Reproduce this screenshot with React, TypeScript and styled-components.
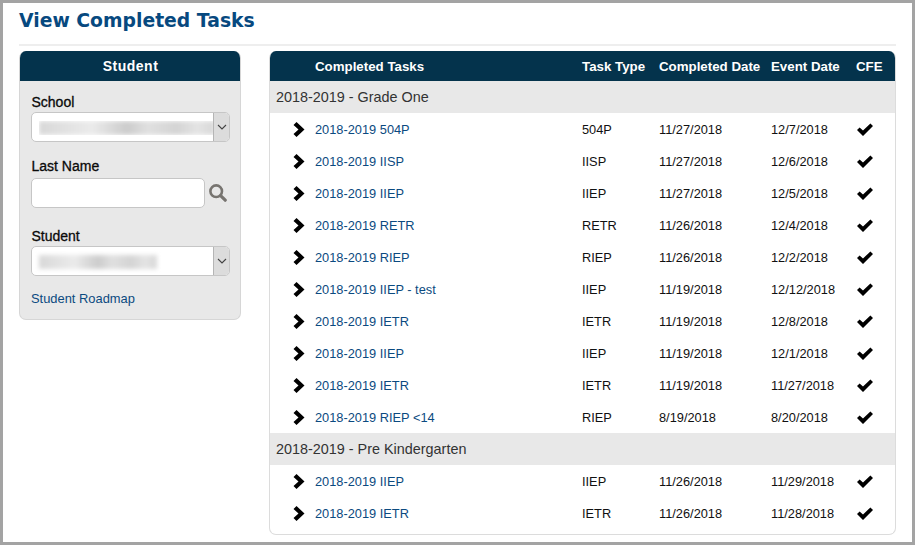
import React from "react";
import styled, { createGlobalStyle } from "styled-components";

const GlobalStyle = createGlobalStyle`
  html, body {
    margin: 0;
    padding: 0;
    background: #fff;
  }
  * {
    box-sizing: border-box;
  }
`;

const Frame = styled.div`
  width: 915px;
  height: 545px;
  border: 3px solid #a3a3a3;
  background: #fff;
  padding: 0 16px;
  font-family: "Liberation Sans", Arial, sans-serif;
  font-size: 12.8px;
  color: #111;
  overflow: hidden;
`;

const Title = styled.h1`
  margin: 0;
  height: 39px;
  font-family: "DejaVu Sans", Verdana, sans-serif;
  font-size: 18.8px;
  line-height: 36px;
  font-weight: 700;
  color: #07497f;
`;

const Rule = styled.div`
  height: 2px;
  margin: 2px 0 5px 0;
  background: #eeeeee;
`;

const Columns = styled.div`
  display: flex;
  align-items: flex-start;
  gap: 28px;
`;

const SidePanel = styled.aside`
  width: 222px;
  height: 269px;
  background: #e8e8e8;
  border: 1px solid #d6d6d6;
  border-top: 0;
  border-radius: 7px;
  overflow: hidden;
`;

const SideHeader = styled.div`
  height: 30px;
  margin: 0 -1px;
  background: #04334c;
  color: #fff;
  font-size: 14px;
  font-weight: 700;
  line-height: 30px;
  text-align: center;
  letter-spacing: 0.5px;
  padding-left: 1px;
`;

const SideBody = styled.div`
  padding: 13px 10px 0 11px;
`;

const FieldLabel = styled.label<{ $height: number }>`
  display: block;
  height: ${(p) => p.$height}px;
  padding-left: 0.5px;
  font-size: 14px;
  line-height: 16px;
  color: #0a0a0a;
  -webkit-text-stroke: 0.3px #0a0a0a;
`;

const Field = styled.div<{ $gap: number }>`
  margin-bottom: ${(p) => p.$gap}px;
`;

const SelectBox = styled.div`
  display: flex;
  width: 199px;
  height: 30px;
  background: #fff;
  border: 1px solid #c6c6c6;
  border-radius: 5px;
  overflow: hidden;
`;

const SelectValue = styled.div`
  flex: 1;
  padding: 8px 0 0 7px;
  overflow: hidden;
`;

const BlurClip = styled.div<{ $clip: boolean }>`
  height: 14px;
  overflow: ${(p) => (p.$clip ? "hidden" : "visible")};
`;

const Blurred = styled.div<{ $width: number }>`
  width: ${(p) => p.$width}px;
  height: 14px;
  background: linear-gradient(
    90deg,
    #d8d8d8 0%,
    #e6e6e6 22%,
    #ebebeb 30%,
    #cccccc 50%,
    #e0e0e0 62%,
    #d4d4d4 78%,
    #e4e4e4 90%,
    #d8d8d8 100%
  );
  filter: blur(2px);
`;

const SelectArrow = styled.div`
  width: 16px;
  background: #dcdcdc;
  border-left: 1px solid #b5b5b5;
  display: flex;
  align-items: center;
  justify-content: center;
`;

const SearchRow = styled.div`
  display: flex;
  align-items: center;
  gap: 4px;
`;

const TextInput = styled.input`
  width: 174px;
  height: 30px;
  background: #fff;
  border: 1px solid #c6c6c6;
  border-radius: 5px;
  padding: 0 6px;
  outline: none;
`;

const SearchIcon = styled.svg`
  display: block;
  width: 18px;
  height: 18px;
`;

const SideLink = styled.a`
  display: block;
  font-size: 12.9px;
  line-height: 16px;
  color: #0b4a80;
  text-decoration: none;
`;

const TablePanel = styled.section`
  width: 627px;
  height: 484px;
  background: #fff;
  border: 1px solid #dcdcdc;
  border-top: 0;
  border-radius: 7px;
  overflow: hidden;
`;

const rowGrid = `
  display: grid;
  grid-template-columns: 45px 267px 77px 112px 85px 1fr;
  align-items: center;
`;

const TableHead = styled.div`
  ${rowGrid}
  height: 30px;
  margin: 0 -1px;
  background: #04334c;
  color: #fff;
  font-size: 13.3px;
  font-weight: 700;
  padding-left: 1px;
`;

const GroupRow = styled.div`
  height: 32px;
  padding-left: 6px;
  background: #e8e8e8;
  color: #333;
  font-size: 14.4px;
  line-height: 32px;
`;

const TaskRow = styled.div`
  ${rowGrid}
  height: 32px;
`;

const ArrowIcon = styled.svg`
  display: block;
  width: 12px;
  height: 15px;
  margin-left: 23px;
`;

const TaskLink = styled.a`
  color: #0b4a80;
  text-decoration: none;
`;

const CheckIcon = styled.svg`
  display: block;
  width: 16px;
  height: 13px;
  margin-left: 1px;
`;

const schoolYear = "2018-2019";

type Task = {
  name: string;
  type: string;
  completed: string;
  event: string;
};

const groups: { title: string; tasks: Task[] }[] = [
  {
    title: `${schoolYear} - Grade One`,
    tasks: [
      { name: "504P", type: "504P", completed: "11/27/2018", event: "12/7/2018" },
      { name: "IISP", type: "IISP", completed: "11/27/2018", event: "12/6/2018" },
      { name: "IIEP", type: "IIEP", completed: "11/27/2018", event: "12/5/2018" },
      { name: "RETR", type: "RETR", completed: "11/26/2018", event: "12/4/2018" },
      { name: "RIEP", type: "RIEP", completed: "11/26/2018", event: "12/2/2018" },
      { name: "IIEP - test", type: "IIEP", completed: "11/19/2018", event: "12/12/2018" },
      { name: "IETR", type: "IETR", completed: "11/19/2018", event: "12/8/2018" },
      { name: "IIEP", type: "IIEP", completed: "11/19/2018", event: "12/1/2018" },
      { name: "IETR", type: "IETR", completed: "11/19/2018", event: "11/27/2018" },
      { name: "RIEP <14", type: "RIEP", completed: "8/19/2018", event: "8/20/2018" },
    ],
  },
  {
    title: `${schoolYear} - Pre Kindergarten`,
    tasks: [
      { name: "IIEP", type: "IIEP", completed: "11/26/2018", event: "11/29/2018" },
      { name: "IETR", type: "IETR", completed: "11/26/2018", event: "11/28/2018" },
    ],
  },
];

function DropdownArrow() {
  return (
    <svg width="10" height="6" viewBox="0 0 10 6" fill="none">
      <path d="M1 1l4 4 4-4" stroke="#444" strokeWidth="1.1" />
    </svg>
  );
}

function FakeSelect({ blurWidth, clip }: { blurWidth: number; clip: boolean }) {
  return (
    <SelectBox>
      <SelectValue>
        <BlurClip $clip={clip}>
          <Blurred $width={blurWidth} />
        </BlurClip>
      </SelectValue>
      <SelectArrow>
        <DropdownArrow />
      </SelectArrow>
    </SelectBox>
  );
}

function Arrow() {
  return (
    <ArrowIcon viewBox="0 0 12 15">
      <path d="M0.5 3L3.5 0L11.5 7.5L3.5 15L0.5 12L5.5 7.5Z" fill="#000" />
    </ArrowIcon>
  );
}

function Check() {
  return (
    <CheckIcon viewBox="0 0 16 13">
      <path d="M0 7L2.6 4.4L6 7.6L13.4 0.4L16 3L6 13Z" fill="#000" />
    </CheckIcon>
  );
}

function Search() {
  return (
    <SearchIcon viewBox="0 0 18 18" fill="none">
      <circle cx="7.2" cy="7.2" r="5.8" stroke="#777470" strokeWidth="2.6" />
      <path d="M11.6 11.6L16.2 16.2" stroke="#777470" strokeWidth="3.2" strokeLinecap="round" />
    </SearchIcon>
  );
}

export default function App() {
  return (
    <Frame>
      <GlobalStyle />
      <Title>View Completed Tasks</Title>
      <Rule />
      <Columns>
        <SidePanel>
          <SideHeader>Student</SideHeader>
          <SideBody>
            <Field $gap={16}>
              <FieldLabel $height={18}>School</FieldLabel>
              <FakeSelect blurWidth={176} clip />
            </Field>
            <Field $gap={20}>
              <FieldLabel $height={20}>Last Name</FieldLabel>
              <SearchRow>
                <TextInput />
                <Search />
              </SearchRow>
            </Field>
            <Field $gap={15}>
              <FieldLabel $height={18}>Student</FieldLabel>
              <FakeSelect blurWidth={118} clip={false} />
            </Field>
            <SideLink>Student Roadmap</SideLink>
          </SideBody>
        </SidePanel>
        <TablePanel>
          <TableHead>
            <span />
            <span>Completed Tasks</span>
            <span>Task Type</span>
            <span>Completed Date</span>
            <span>Event Date</span>
            <span>CFE</span>
          </TableHead>
          {groups.map((group) => (
            <React.Fragment key={group.title}>
              <GroupRow>{group.title}</GroupRow>
              {group.tasks.map((task, i) => (
                <TaskRow key={i}>
                  <Arrow />
                  <TaskLink>
                    {schoolYear} {task.name}
                  </TaskLink>
                  <span>{task.type}</span>
                  <span>{task.completed}</span>
                  <span>{task.event}</span>
                  <Check />
                </TaskRow>
              ))}
            </React.Fragment>
          ))}
        </TablePanel>
      </Columns>
    </Frame>
  );
}
